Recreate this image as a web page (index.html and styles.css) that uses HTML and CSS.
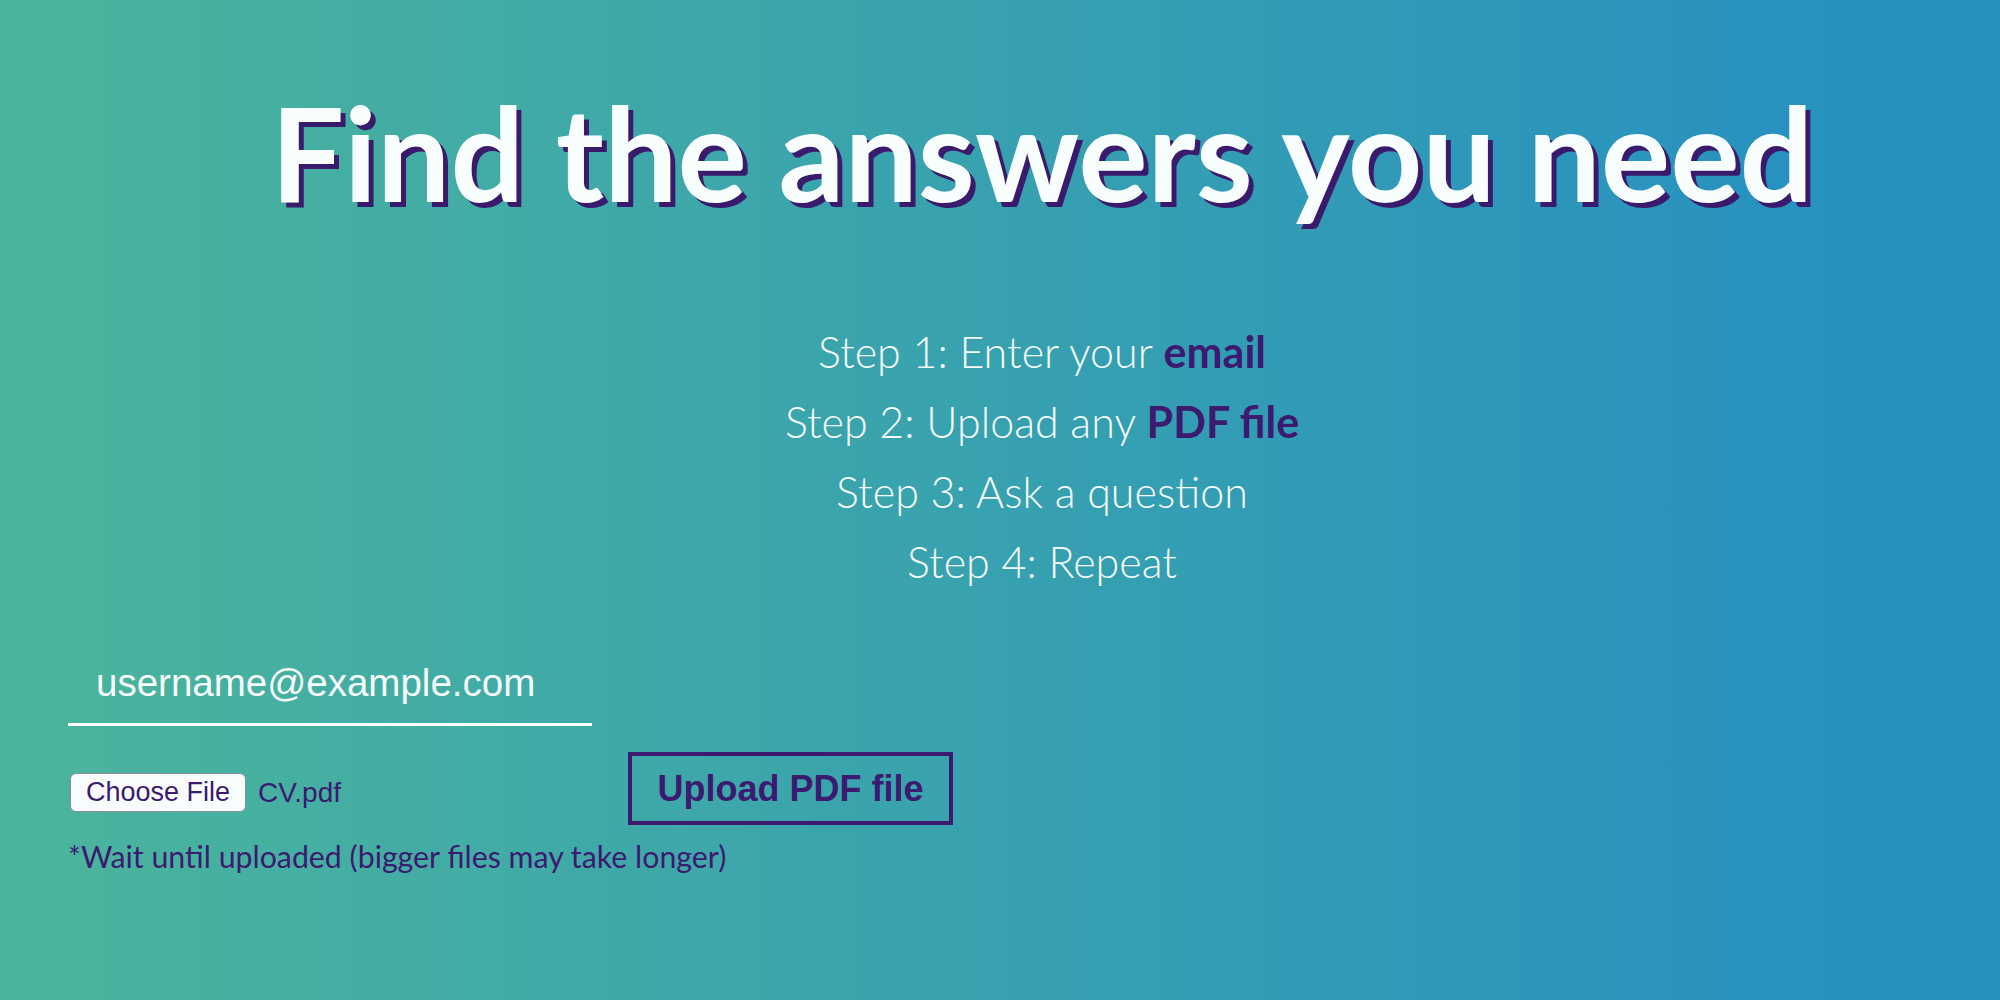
FILE: index.html
```html
<!DOCTYPE html>
<html lang="en">
<head>
<meta charset="utf-8">
<title>Find the answers you need</title>
<link rel="stylesheet" href="styles.css">
</head>
<body>
  <main class="page">
    <section class="hero">
      <h1 class="title">Find the answers you need</h1>
      <div class="steps">
        <p class="step">Step 1: Enter your <strong>email</strong></p>
        <p class="step">Step 2: Upload any <strong>PDF file</strong></p>
        <p class="step">Step 3: Ask a question</p>
        <p class="step">Step 4: Repeat</p>
      </div>
    </section>
    <form class="upload-form">
      <input class="email" type="email" value="username@example.com">
      <div class="file-row">
        <div class="file-picker">
          <span class="file-btn">Choose File</span>
          <span class="file-name">CV.pdf</span>
        </div>
        <button class="upload-btn" type="button">Upload PDF file</button>
      </div>
      <p class="note">*Wait until uploaded (bigger files may take longer)</p>
    </form>
  </main>
</body>
</html>
```

FILE: styles.css
```css
html, body {
  margin: 0;
  padding: 0;
}

body {
  min-height: 1000px;
  background: linear-gradient(to right, #4bb59c 0%, #2791c0 91%, #2791c0 100%);
  font-family: "Lato", "Open Sans", sans-serif;
  color: #ffffff;
}

.page {
  display: flex;
  flex-direction: column;
}

.hero {
  padding-left: 84px;
  text-align: center;
}

.title {
  margin: 71px 0 0;
  font-size: 130px;
  line-height: 162px;
  font-weight: 700;
  color: #f8fdfd;
  text-shadow: 5px 5px 0 #3a1a6c;
  white-space: nowrap;
}

.steps {
  margin-top: 84px;
}

.step {
  margin: 0;
  font-size: 43px;
  line-height: 70px;
  font-weight: 300;
  color: #f6fbfb;
}

.step strong {
  font-weight: 700;
  color: #3b1a70;
}

.upload-form {
  padding-left: 68px;
  margin-top: 46px;
  display: flex;
  flex-direction: column;
  align-items: flex-start;
}

.email {
  box-sizing: content-box;
  width: 496px;
  height: 80px;
  padding: 0 0 0 28px;
  margin: 0;
  border: none;
  border-bottom: 3px solid #ffffff;
  background: transparent;
  outline: none;
  font-family: "Liberation Sans", Arial, sans-serif;
  font-size: 38.5px;
  color: #f6fbfb;
}

.file-row {
  margin-top: 26px;
  display: flex;
  align-items: center;
}

.file-picker {
  width: 560px;
  display: flex;
  align-items: center;
  gap: 12px;
  margin-top: 8px;
}

.file-btn {
  box-sizing: border-box;
  width: 176px;
  height: 39px;
  margin-left: 2px;
  display: flex;
  align-items: center;
  justify-content: center;
  background: #f8fcfc;
  border: 1px solid #8c8c9c;
  border-radius: 6px;
  font-family: "Liberation Sans", Arial, sans-serif;
  font-size: 27px;
  color: #3b1a70;
}

.file-name {
  font-family: "Liberation Sans", Arial, sans-serif;
  font-size: 28px;
  color: #3b1a70;
}

.upload-btn {
  box-sizing: border-box;
  width: 325px;
  height: 73px;
  padding: 0;
  border: 4px solid #3b1a70;
  background: transparent;
  font-family: "Liberation Sans", Arial, sans-serif;
  font-weight: 700;
  font-size: 36px;
  color: #3b1a70;
}

.note {
  margin: 13px 0 0;
  font-size: 30.3px;
  line-height: 36px;
  color: #3b1a70;
}
```
